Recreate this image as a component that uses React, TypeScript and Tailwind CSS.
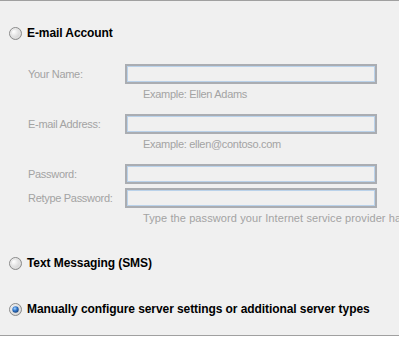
import React from "react";

function Radio({ checked }: { checked?: boolean }) {
  return (
    <svg width="13" height="13" viewBox="0 0 13 13" className="shrink-0">
      <defs>
        <radialGradient id="rbg" cx="0.35" cy="0.35" r="0.8">
          <stop offset="0" stopColor="#ffffff" />
          <stop offset="1" stopColor="#c4c4c4" />
        </radialGradient>
        <radialGradient id="rdot" cx="0.4" cy="0.35" r="0.7">
          <stop offset="0" stopColor="#a8d6ff" />
          <stop offset="0.5" stopColor="#2f74c9" />
          <stop offset="1" stopColor="#173e73" />
        </radialGradient>
      </defs>
      <circle cx="6.5" cy="6.5" r="6" fill="url(#rbg)" stroke="#8a8b8b" strokeWidth="1" />
      <circle cx="6.5" cy="6.5" r="4.5" fill="none" stroke="#e4e4e4" strokeWidth="1" />
      {checked && <circle cx="6.5" cy="6.5" r="3.2" fill="url(#rdot)" />}
    </svg>
  );
}

function RadioRow({ label, checked, className }: { label: string; checked?: boolean; className?: string }) {
  return (
    <div className={`flex h-[14px] items-center gap-[5px] pl-[9px] ${className ?? ""}`}>
      <Radio checked={checked} />
      <span className="whitespace-nowrap text-[12px] font-bold leading-[14px] tracking-[-0.08px] text-black">
        {label}
      </span>
    </div>
  );
}

function FieldRow({ label, className }: { label: string; className?: string }) {
  return (
    <div className={`flex h-[20px] items-center ${className ?? ""}`}>
      <span className="w-[125px] shrink-0 whitespace-nowrap pl-[28px] text-[11px] leading-[14px] tracking-[-0.3px] text-[#a3a3a3]">
        {label}
      </span>
      <div className="h-[20px] w-[252px] shrink-0 border-2 border-[#aaadb2] bg-[#f0f0f0] shadow-[inset_0_0_0_1px_#bad2ea]" />
    </div>
  );
}

function Hint({ text, className }: { text: string; className?: string }) {
  return (
    <div className={`whitespace-nowrap pl-[143px] text-[11px] leading-[12px] text-[#a3a3a3] ${className ?? ""}`}>
      {text}
    </div>
  );
}

export default function App() {
  return (
    <div className="h-[336px] w-[399px] overflow-hidden border-y border-[#a0a0a0] bg-[#f0f0f0] font-['Liberation_Sans',sans-serif]">
      <RadioRow label="E-mail Account" className="mt-[25px]" />
      <FieldRow label="Your Name:" className="mt-[24px]" />
      <Hint text="Example: Ellen Adams" className="mt-[4px] tracking-[-0.3px]" />
      <FieldRow label="E-mail Address:" className="mt-[14px]" />
      <Hint text="Example: ellen@contoso.com" className="mt-[4px] tracking-[-0.3px]" />
      <FieldRow label="Password:" className="mt-[14px]" />
      <FieldRow label="Retype Password:" className="mt-[4px]" />
      <Hint text="Type the password your Internet service provider has given you." className="mt-[4px] tracking-[0.1px]" />
      <RadioRow label="Text Messaging (SMS)" className="mt-[32px]" />
      <RadioRow label="Manually configure server settings or additional server types" checked className="mt-[32px]" />
    </div>
  );
}
